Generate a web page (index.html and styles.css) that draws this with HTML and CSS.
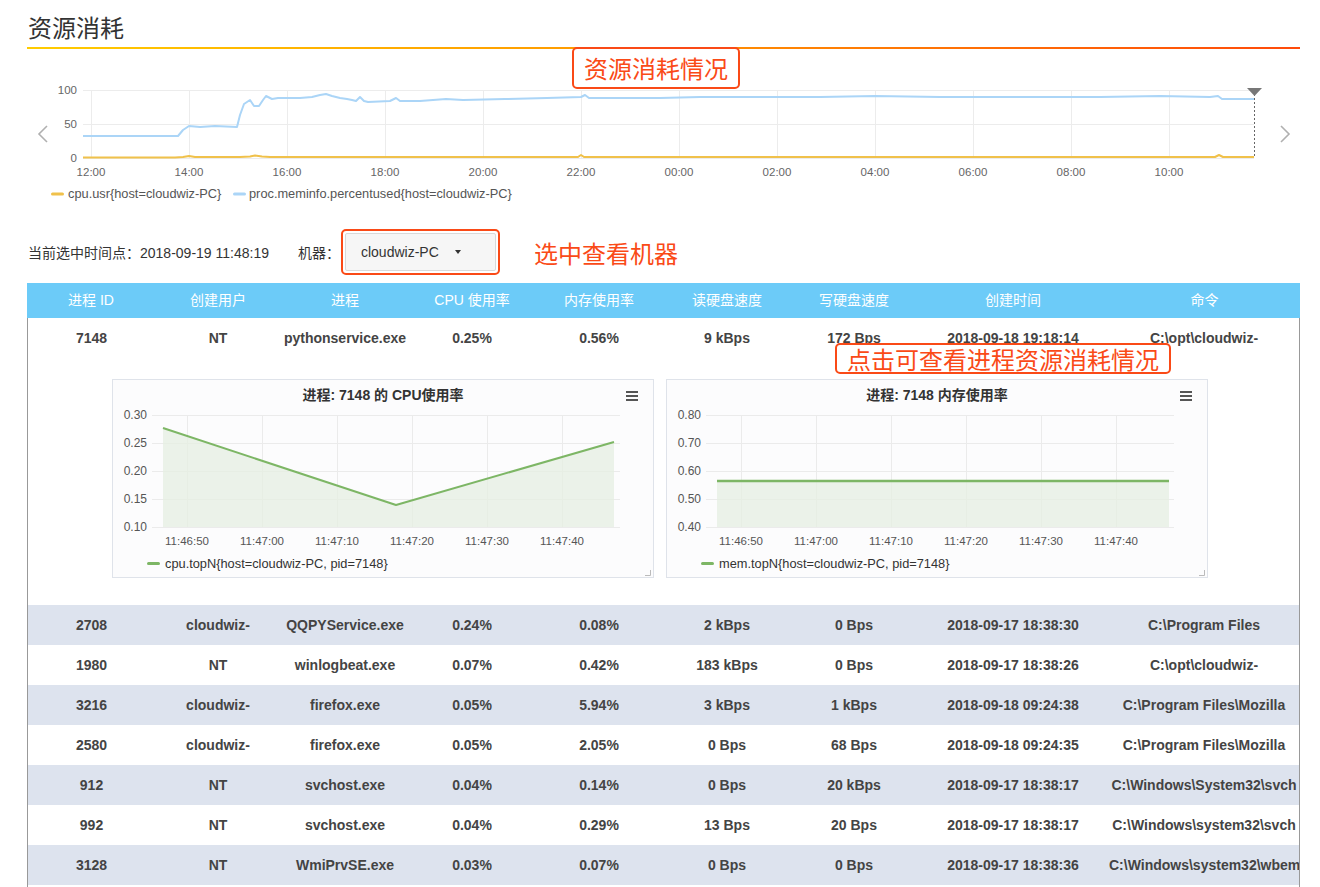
FILE: index.html
```html
<!DOCTYPE html>
<html lang="zh-CN">
<head>
<meta charset="utf-8">
<title>资源消耗</title>
<link rel="stylesheet" href="styles.css">
</head>
<body>
<div class="page">
  <h1 class="title">资源消耗</h1>
  <div class="title-rule"></div>

  <section class="overview">
    <svg class="overview-chart" width="1273" height="180" viewBox="27 49 1273 180" xmlns="http://www.w3.org/2000/svg">
      <g class="grid" stroke="#ececec" stroke-width="1">
        <line x1="83" y1="90.5" x2="1254" y2="90.5"/>
        <line x1="83" y1="124.5" x2="1254" y2="124.5"/>
        <line x1="83" y1="158.5" x2="1254" y2="158.5"/>
        <line x1="91.5" y1="90" x2="91.5" y2="158"/>
        <line x1="189.5" y1="90" x2="189.5" y2="158"/>
        <line x1="287.5" y1="90" x2="287.5" y2="158"/>
        <line x1="385.5" y1="90" x2="385.5" y2="158"/>
        <line x1="483.5" y1="90" x2="483.5" y2="158"/>
        <line x1="581.5" y1="90" x2="581.5" y2="158"/>
        <line x1="679.5" y1="90" x2="679.5" y2="158"/>
        <line x1="777.5" y1="90" x2="777.5" y2="158"/>
        <line x1="875.5" y1="90" x2="875.5" y2="158"/>
        <line x1="973.5" y1="90" x2="973.5" y2="158"/>
        <line x1="1071.5" y1="90" x2="1071.5" y2="158"/>
        <line x1="1169.5" y1="90" x2="1169.5" y2="158"/>
      </g>
      <g class="axis-y" font-size="11.5" fill="#666" text-anchor="end">
        <text x="77" y="94">100</text>
        <text x="77" y="128">50</text>
        <text x="77" y="162">0</text>
      </g>
      <g class="axis-x" font-size="11.5" fill="#666" text-anchor="middle">
        <text x="91" y="176">12:00</text>
        <text x="189" y="176">14:00</text>
        <text x="287" y="176">16:00</text>
        <text x="385" y="176">18:00</text>
        <text x="483" y="176">20:00</text>
        <text x="581" y="176">22:00</text>
        <text x="679" y="176">00:00</text>
        <text x="777" y="176">02:00</text>
        <text x="875" y="176">04:00</text>
        <text x="973" y="176">06:00</text>
        <text x="1071" y="176">08:00</text>
        <text x="1169" y="176">10:00</text>
      </g>
      <polyline fill="none" stroke="#abd5f7" stroke-width="2" stroke-linejoin="round"
        points="83,136 178,136 183,130 189,126 200,127 215,126 237,127 240,115 244,104 250,100 254,106 259,106 263,100 266,96 272,99 278,98 300,98 312,97 320,95 326,94 332,96 340,98 347,99 352,100 356,101 360,97 364,101 368,102 390,101 396,98 400,101 420,101 446,99 463,100 505,99 547,98 581,97 585,95 589,98 660,98 700,97 760,97 820,97 875,96 940,97 1000,97 1100,97 1160,96 1210,97 1218,96 1222,99 1254,99"/>
      <polyline fill="none" stroke="#f0c14b" stroke-width="2" stroke-linejoin="round"
        points="83,157.5 175,157.5 183,157 189,156 195,157 240,157 250,156.5 255,155.5 262,156.5 270,157 578,157 581,155 584,157 1215,157 1219,155 1223,157 1254,157"/>
      <line x1="1254.5" y1="94" x2="1254.5" y2="158" stroke="#666" stroke-width="1" stroke-dasharray="2,2"/>
      <polygon points="1247,88 1262,88 1254.5,96" fill="#777"/>
      <polyline points="47,126 39,134 47,142" fill="none" stroke="#b0b0b0" stroke-width="1.6"/>
      <polyline points="1281,126 1289,134 1281,142" fill="none" stroke="#b0b0b0" stroke-width="1.6"/>
      <rect x="51" y="192.5" width="13" height="3" rx="1.5" fill="#f0c14b"/>
      <text x="68" y="198" font-size="12.8" fill="#555">cpu.usr{host=cloudwiz-PC}</text>
      <rect x="233" y="192.5" width="13" height="3" rx="1.5" fill="#abd5f7"/>
      <text x="249" y="198" font-size="12.8" fill="#555">proc.meminfo.percentused{host=cloudwiz-PC}</text>
    </svg>
    <div class="note note-top">资源消耗情况</div>
  </section>

  <div class="toolbar">
    <span class="time-label">当前选中时间点：2018-09-19 11:48:19</span>
    <span class="machine-label">机器：</span>
    <span class="note-frame">
      <span class="select">cloudwiz-PC<span class="caret"></span></span>
    </span>
    <span class="note-text">选中查看机器</span>
  </div>

  <div class="table">
    <div class="thead">
      <div>进程 ID</div><div>创建用户</div><div>进程</div><div>CPU 使用率</div><div>内存使用率</div><div>读硬盘速度</div><div>写硬盘速度</div><div>创建时间</div><div>命令</div>
    </div>
    <div class="tbody">
      <div class="row">
        <div>7148</div><div>NT</div><div>pythonservice.exe</div><div>0.25%</div><div>0.56%</div><div>9 kBps</div><div>172 Bps</div><div>2018-09-18 19:18:14</div><div>C:\opt\cloudwiz-</div>
      </div>
      <div class="detail">
        <div class="mini">
          <svg width="540" height="197" viewBox="1 1 540 197" xmlns="http://www.w3.org/2000/svg">
            <text x="271" y="21" text-anchor="middle" font-size="14" font-weight="bold" fill="#333">进程: 7148 的 CPU使用率</text>
            <g fill="#555"><rect x="514" y="12" width="12" height="2"/><rect x="514" y="16" width="12" height="2"/><rect x="514" y="20" width="12" height="2"/></g>
            <g stroke="#ebebeb" stroke-width="1">
              <line x1="40" y1="36.5" x2="508" y2="36.5"/><line x1="40" y1="64.5" x2="508" y2="64.5"/><line x1="40" y1="92.5" x2="508" y2="92.5"/><line x1="40" y1="120.5" x2="508" y2="120.5"/><line x1="40" y1="148.5" x2="508" y2="148.5"/>
              <line x1="75.5" y1="36" x2="75.5" y2="148"/><line x1="150.5" y1="36" x2="150.5" y2="148"/><line x1="225.5" y1="36" x2="225.5" y2="148"/><line x1="300.5" y1="36" x2="300.5" y2="148"/><line x1="375.5" y1="36" x2="375.5" y2="148"/><line x1="450.5" y1="36" x2="450.5" y2="148"/>
            </g>
            <g font-size="12" fill="#555" text-anchor="end">
              <text x="35" y="40">0.30</text><text x="35" y="68">0.25</text><text x="35" y="96">0.20</text><text x="35" y="124">0.15</text><text x="35" y="152">0.10</text>
            </g>
            <g font-size="11.5" fill="#555" text-anchor="middle">
              <text x="75" y="166">11:46:50</text><text x="150" y="166">11:47:00</text><text x="225" y="166">11:47:10</text><text x="300" y="166">11:47:20</text><text x="375" y="166">11:47:30</text><text x="450" y="166">11:47:40</text>
            </g>
            <polygon points="51,49 284,126 502,63 502,148 51,148" fill="#e6efe1" fill-opacity="0.75"/>
            <polyline points="51,49 284,126 502,63" fill="none" stroke="#7db665" stroke-width="2" stroke-linejoin="round"/>
            <rect x="35" y="183" width="13" height="3" rx="1.5" fill="#7db665"/>
            <text x="53" y="188.5" font-size="12.8" fill="#333">cpu.topN{host=cloudwiz-PC, pid=7148}</text>
            <path d="M538.5 191 V196.5 H533" fill="none" stroke="#bbb" stroke-width="1"/>
          </svg>
        </div>
        <div class="mini">
          <svg width="540" height="197" viewBox="1 1 540 197" xmlns="http://www.w3.org/2000/svg">
            <text x="271" y="21" text-anchor="middle" font-size="14" font-weight="bold" fill="#333">进程: 7148 内存使用率</text>
            <g fill="#555"><rect x="514" y="12" width="12" height="2"/><rect x="514" y="16" width="12" height="2"/><rect x="514" y="20" width="12" height="2"/></g>
            <g stroke="#ebebeb" stroke-width="1">
              <line x1="40" y1="36.5" x2="508" y2="36.5"/><line x1="40" y1="64.5" x2="508" y2="64.5"/><line x1="40" y1="92.5" x2="508" y2="92.5"/><line x1="40" y1="120.5" x2="508" y2="120.5"/><line x1="40" y1="148.5" x2="508" y2="148.5"/>
              <line x1="75.5" y1="36" x2="75.5" y2="148"/><line x1="150.5" y1="36" x2="150.5" y2="148"/><line x1="225.5" y1="36" x2="225.5" y2="148"/><line x1="300.5" y1="36" x2="300.5" y2="148"/><line x1="375.5" y1="36" x2="375.5" y2="148"/><line x1="450.5" y1="36" x2="450.5" y2="148"/>
            </g>
            <g font-size="12" fill="#555" text-anchor="end">
              <text x="35" y="40">0.80</text><text x="35" y="68">0.70</text><text x="35" y="96">0.60</text><text x="35" y="124">0.50</text><text x="35" y="152">0.40</text>
            </g>
            <g font-size="11.5" fill="#555" text-anchor="middle">
              <text x="75" y="166">11:46:50</text><text x="150" y="166">11:47:00</text><text x="225" y="166">11:47:10</text><text x="300" y="166">11:47:20</text><text x="375" y="166">11:47:30</text><text x="450" y="166">11:47:40</text>
            </g>
            <polygon points="51,102 503,102 503,148 51,148" fill="#e6efe1" fill-opacity="0.75"/>
            <polyline points="51,102 503,102" fill="none" stroke="#7db665" stroke-width="2.5"/>
            <rect x="35" y="183" width="13" height="3" rx="1.5" fill="#7db665"/>
            <text x="53" y="188.5" font-size="12.8" fill="#333">mem.topN{host=cloudwiz-PC, pid=7148}</text>
            <path d="M538.5 191 V196.5 H533" fill="none" stroke="#bbb" stroke-width="1"/>
          </svg>
        </div>
      </div>
      <div class="row alt">
        <div>2708</div><div>cloudwiz-</div><div>QQPYService.exe</div><div>0.24%</div><div>0.08%</div><div>2 kBps</div><div>0 Bps</div><div>2018-09-17 18:38:30</div><div>C:\Program Files</div>
      </div>
      <div class="row">
        <div>1980</div><div>NT</div><div>winlogbeat.exe</div><div>0.07%</div><div>0.42%</div><div>183 kBps</div><div>0 Bps</div><div>2018-09-17 18:38:26</div><div>C:\opt\cloudwiz-</div>
      </div>
      <div class="row alt">
        <div>3216</div><div>cloudwiz-</div><div>firefox.exe</div><div>0.05%</div><div>5.94%</div><div>3 kBps</div><div>1 kBps</div><div>2018-09-18 09:24:38</div><div>C:\Program Files\Mozilla</div>
      </div>
      <div class="row">
        <div>2580</div><div>cloudwiz-</div><div>firefox.exe</div><div>0.05%</div><div>2.05%</div><div>0 Bps</div><div>68 Bps</div><div>2018-09-18 09:24:35</div><div>C:\Program Files\Mozilla</div>
      </div>
      <div class="row alt">
        <div>912</div><div>NT</div><div>svchost.exe</div><div>0.04%</div><div>0.14%</div><div>0 Bps</div><div>20 kBps</div><div>2018-09-17 18:38:17</div><div>C:\Windows\System32\svch</div>
      </div>
      <div class="row">
        <div>992</div><div>NT</div><div>svchost.exe</div><div>0.04%</div><div>0.29%</div><div>13 Bps</div><div>20 Bps</div><div>2018-09-17 18:38:17</div><div>C:\Windows\system32\svch</div>
      </div>
      <div class="row alt">
        <div>3128</div><div>NT</div><div>WmiPrvSE.exe</div><div>0.03%</div><div>0.07%</div><div>0 Bps</div><div>0 Bps</div><div>2018-09-17 18:38:36</div><div>C:\Windows\system32\wbem</div>
      </div>
      <div class="row">
        <div></div><div></div><div></div><div></div><div></div><div></div><div></div><div></div><div></div>
      </div>
    </div>
    <div class="note note-row">点击可查看进程资源消耗情况</div>
  </div>
</div>
</body>
</html>
```

FILE: styles.css
```css
html, body {
  margin: 0;
  padding: 0;
  background: #fff;
}

body {
  font-family: "Liberation Sans", "Noto Sans CJK SC", sans-serif;
  color: #333;
  overflow: hidden;
  height: 887px;
}

svg text {
  font-family: "Liberation Sans", "Noto Sans CJK SC", sans-serif;
}

.page {
  padding: 14px 20px 0 27px;
}

.title {
  margin: 0;
  font-size: 24px;
  line-height: 30px;
  font-weight: normal;
  color: #333;
  padding-left: 1px;
  height: 33px;
}

.title-rule {
  height: 2px;
  background: linear-gradient(to right, #ffcc00 0%, #ff9a00 45%, #ff4a0a 100%);
}

.overview {
  position: relative;
  height: 180px;
}

.overview-chart {
  display: block;
}

.note {
  position: absolute;
  border: 2px solid #fa4a17;
  border-radius: 5px;
  color: #fa4a17;
  font-size: 24px;
  font-family: "Noto Sans CJK SC", sans-serif;
  white-space: nowrap;
  background: #fff;
}

.note-top {
  left: 545px;
  top: -2px;
  padding: 0 10px;
  line-height: 38px;
}

.note-row {
  left: 808px;
  top: 60px;
  padding: 0 10px;
  line-height: 27px;
}

.toolbar {
  display: flex;
  align-items: center;
  height: 46px;
  font-size: 14px;
  color: #333;
}

.time-label {
  padding-left: 1px;
  margin-right: 2px;
}

.machine-label {
  margin-left: 27px;
  margin-right: 1px;
}

.note-frame {
  display: inline-block;
  border: 2px solid #fa4a17;
  border-radius: 5px;
  padding: 2px;
}

.select {
  display: flex;
  align-items: center;
  box-sizing: border-box;
  width: 151px;
  height: 38px;
  padding-left: 15px;
  background: #f6f6f6;
  border: 1px solid #d9d9d9;
  border-radius: 2px;
  font-size: 14px;
  color: #333;
}

.caret {
  width: 0;
  height: 0;
  margin-left: 16px;
  border-left: 3.5px solid transparent;
  border-right: 3.5px solid transparent;
  border-top: 4px solid #333;
}

.note-text {
  margin-left: 34px;
  color: #fa4a17;
  font-size: 24px;
  font-family: "Noto Sans CJK SC", sans-serif;
}

.table {
  position: relative;
  margin-top: 8px;
}

.thead {
  display: grid;
  grid-template-columns: 128px 126px 128px 126px 128px 128px 126px 192px 191px;
  height: 35px;
  line-height: 35px;
  background: #6ccbf8;
  color: #fff;
  font-size: 14px;
  text-align: center;
}

.tbody {
  border-left: 1px solid #999;
  border-right: 1px solid #999;
}

.row {
  display: grid;
  grid-template-columns: 127px 126px 128px 126px 128px 128px 126px 192px 190px;
  height: 40px;
  line-height: 41px;
  font-size: 14px;
  font-weight: bold;
  color: #444;
  text-align: center;
}

.row > div {
  white-space: nowrap;
  overflow: hidden;
}

.row.alt {
  background: #dde3ee;
}

.detail {
  display: flex;
  gap: 12px;
  padding: 21px 0 27px 84px;
}

.mini {
  box-sizing: border-box;
  width: 542px;
  height: 199px;
  border: 1px solid #dfe3ea;
  background: #fcfcfd;
}

.mini svg {
  display: block;
}
```
